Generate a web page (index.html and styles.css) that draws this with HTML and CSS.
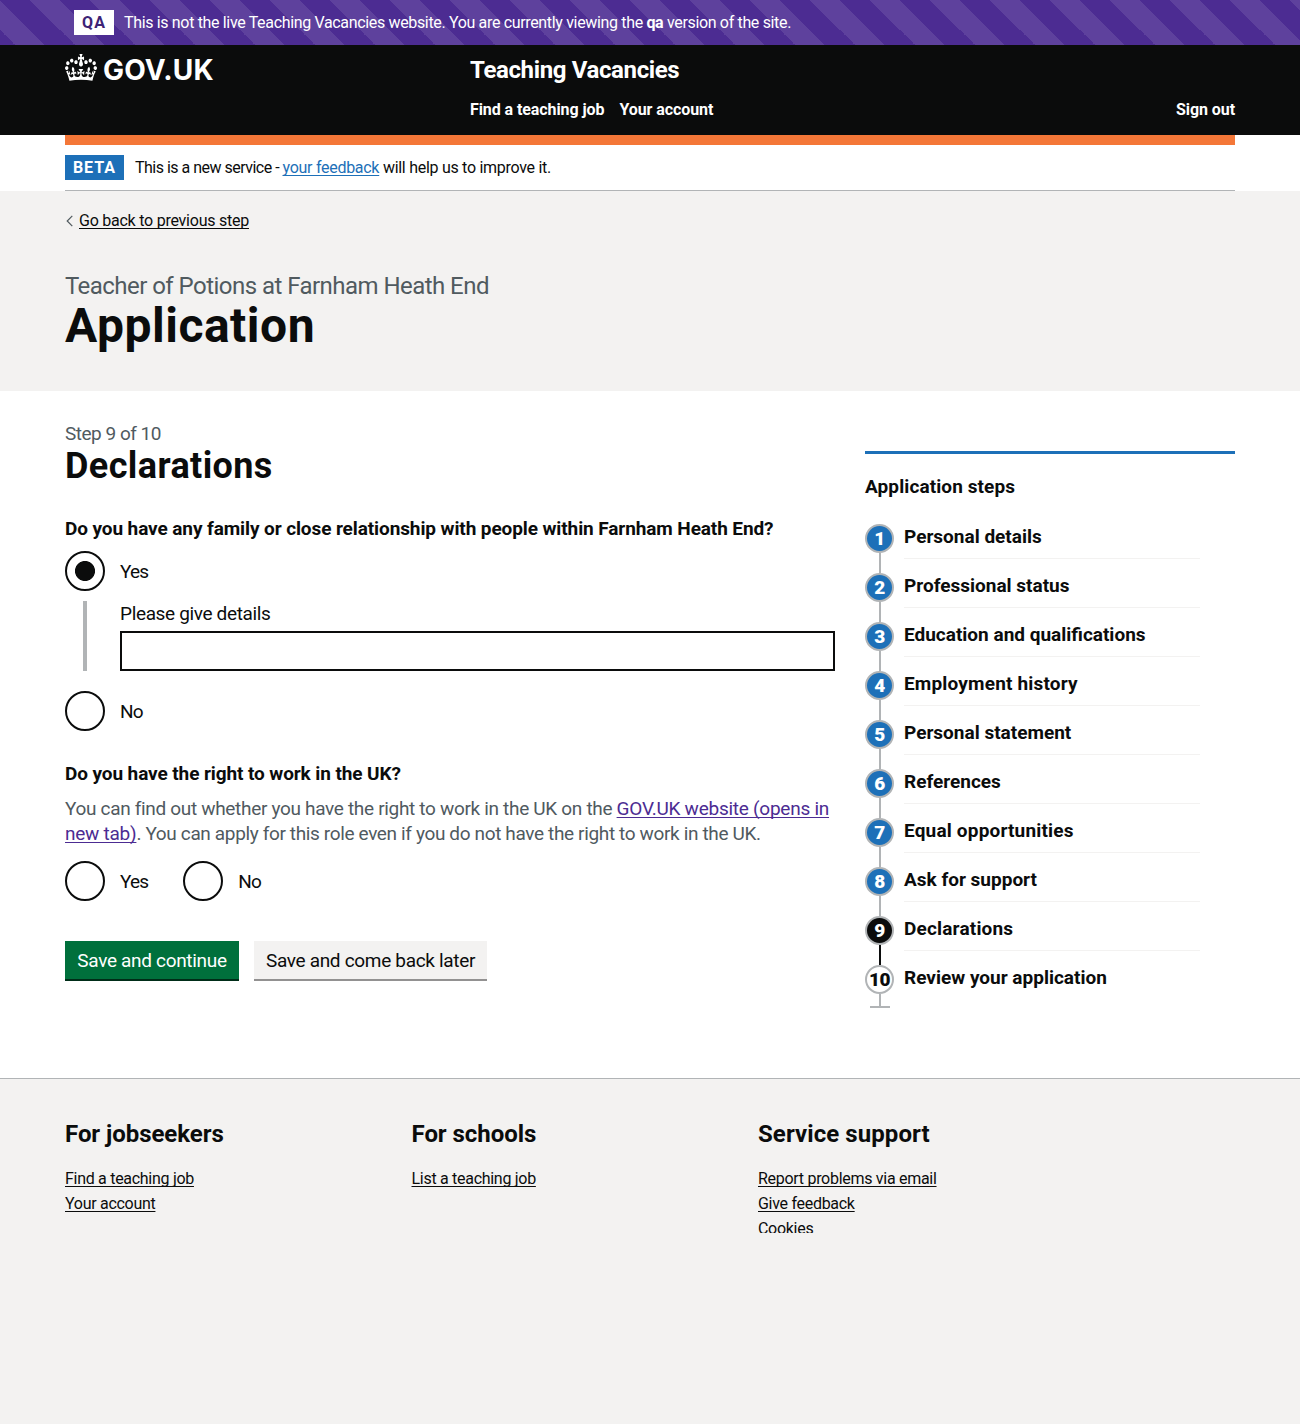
FILE: index.html
```html
<!DOCTYPE html>
<html lang="en">
<head>
<meta charset="utf-8">
<title>Declarations - Application - Teaching Vacancies</title>
<link rel="stylesheet" href="styles.css">
</head>
<body>
<div class="env-banner">
  <strong class="env-banner__tag">QA</strong>
  <span class="env-banner__text">This is not the live Teaching Vacancies website. You are currently viewing the <b>qa</b> version of the site.</span>
</div>

<header class="header">
  <div class="container header__row">
    <a class="logo" href="#">
      <svg class="logo__crown" viewBox="0 0 132 97" preserveAspectRatio="none" aria-hidden="true"><path fill="currentColor" d="M25 30.2c3.5 1.5 7.7-.2 9.1-3.7 1.5-3.6-.2-7.8-3.9-9.2-3.6-1.4-7.6.3-9.1 3.9-1.4 3.5.3 7.5 3.9 9zM9 39.5c3.6 1.5 7.8-.2 9.2-3.7 1.5-3.6-.2-7.8-3.9-9.1-3.6-1.5-7.6.2-9.1 3.8-1.4 3.5.3 7.5 3.8 9zM4.4 57.2c3.5 1.5 7.7-.2 9.1-3.8 1.5-3.6-.2-7.7-3.9-9.1-3.5-1.5-7.6.3-9.1 3.8-1.4 3.5.3 7.6 3.9 9.1zm38.3-21.4c3.5 1.5 7.7-.2 9.1-3.8 1.5-3.6-.2-7.7-3.9-9.1-3.6-1.5-7.6.3-9.1 3.8-1.3 3.6.4 7.7 3.9 9.1zm64.4-5.6c-3.6 1.5-7.8-.2-9.1-3.7-1.5-3.6.2-7.8 3.8-9.2 3.6-1.4 7.7.3 9.2 3.9 1.3 3.5-.4 7.5-3.9 9zm15.9 9.3c-3.6 1.5-7.7-.2-9.1-3.7-1.5-3.6.2-7.8 3.7-9.1 3.6-1.5 7.7.2 9.2 3.8 1.5 3.5-.3 7.5-3.8 9zm4.7 17.7c-3.6 1.5-7.8-.2-9.2-3.8-1.5-3.6.2-7.7 3.9-9.1 3.6-1.5 7.7.3 9.2 3.8 1.3 3.5-.4 7.6-3.9 9.1zM89.3 35.8c-3.6 1.5-7.8-.2-9.2-3.8-1.4-3.6.2-7.7 3.9-9.1 3.6-1.5 7.7.3 9.2 3.8 1.4 3.6-.3 7.7-3.9 9.1zM69.7 17.7l8.9 4.7V9.3l-8.9 2.8c-.2-.3-.5-.6-.9-.9L72.4 0H59.6l3.5 11.2c-.3.3-.6.5-.9.9l-8.8-2.8v13.1l8.8-4.7c.3.3.6.7.9.9l-5 15.4v.1c-.2.8-.4 1.6-.4 2.4 0 4.1 3.1 7.5 7 8.1h.2c.3 0 .7.1 1 .1.4 0 .7 0 1-.1h.2c4-.6 7.1-4.1 7.1-8.1 0-.8-.1-1.7-.4-2.4V34l-5.1-15.4c.4-.2.7-.6 1-.9zM66 92.8c16.9 0 32.8 1.1 47.1 3.2 4-16.9 8.9-26.7 14-33.5l-9.6-3.4c1 4.9 1.1 7.2 0 10.2-1.5-1.4-3-4.3-4.2-8.7L108.6 76c2.8-2 5-3.2 7.5-3.3-4.4 9.4-10 11.9-13.6 11.2-4.3-.8-6.3-4.6-5.6-7.9 1-4.7 5.7-5.9 8-.5 4.3-8.7-3-11.4-7.6-8.8 7.1-7.2 7.9-13.5 2.1-21.1-8 6.1-8.1 12.3-4.5 20.8-4.7-5.4-12.1-2.5-9.5 6.2 3.4-5.2 7.9-2 7.2 3.1-.6 4.3-6.4 7.8-13.5 7.2-10.3-.9-10.9-8-11.2-13.8 2.5-.5 7.1 1.8 11 7.3L80.2 60c-4.1 4.4-8 5.3-12.3 5.4 1.4-4.4 8-11.6 8-11.6H55.5s6.4 7.2 7.9 11.6c-4.2-.1-8-1-12.3-5.4l1.4 16.4c3.9-5.5 8.5-7.7 10.9-7.3-.3 5.8-.9 12.8-11.1 13.8-7.2.6-12.9-2.9-13.5-7.2-.7-5 3.8-8.3 7.1-3.1 2.7-8.7-4.6-11.6-9.4-6.2 3.7-8.5 3.6-14.7-4.6-20.8-5.8 7.6-5 13.9 2.2 21.1-4.7-2.6-11.9.1-7.7 8.8 2.3-5.5 7.1-4.2 8.1.5.7 3.3-1.3 7.1-5.7 7.9-3.5.7-9-1.8-13.5-11.2 2.5.1 4.7 1.3 7.5 3.3l-4.7-15.4c-1.2 4.4-2.7 7.2-4.3 8.7-1.1-3-.9-5.3 0-10.2l-9.5 3.4c5 6.9 9.9 16.7 14 33.5 14.8-2.1 30.8-3.2 47.7-3.2z"/></svg>
      <span class="logo__text">GOV.UK</span>
    </a>
    <div class="header__content">
      <a class="header__service" href="#">Teaching Vacancies</a>
      <nav class="header__nav">
        <a href="#">Find a teaching job</a>
        <a href="#">Your account</a>
        <a class="header__signout" href="#">Sign out</a>
      </nav>
    </div>
  </div>
</header>

<div class="container phase">
  <strong class="phase__tag">BETA</strong>
  <span class="phase__text"><span class="phase__lead">This is a new service - </span><a href="#">your feedback</a> will help us to improve it.</span>
</div>

<div class="hero">
  <div class="container">
    <a class="back" href="#"><svg class="back__arrow" viewBox="0 0 8 12" aria-hidden="true"><path d="M6.8 .9 1.7 6l5.1 5.1" fill="none" stroke="#505a5f" stroke-width="1.2"/></svg><span class="back__text">Go back to previous step</span></a>
    <span class="hero__caption">Teacher of Potions at Farnham Heath End</span>
    <h1 class="hero__title">Application</h1>
  </div>
</div>

<main class="container main">
  <form class="form">
    <span class="form__caption">Step 9 of 10</span>
    <h2 class="form__title">Declarations</h2>

    <h3 class="question">Do you have any family or close relationship with people within Farnham Heath End?</h3>
    <label class="radio"><span class="radio__dot radio__dot--on"></span><span class="radio__label">Yes</span></label>
    <div class="conditional">
      <label class="conditional__label" for="details">Please give details</label>
      <input class="conditional__input" id="details" type="text">
    </div>
    <label class="radio"><span class="radio__dot"></span><span class="radio__label">No</span></label>

    <h3 class="question question--second">Do you have the right to work in the UK?</h3>
    <div class="hint">You can find out whether you have the right to work in the UK on the <a href="#">GOV.UK website (opens in<br>new tab)</a><span class="hint__rest">. You can apply for this role even if you do not have the right to work in the UK.</span></div>
    <div class="radios-inline">
      <label class="radio"><span class="radio__dot"></span><span class="radio__label">Yes</span></label>
      <label class="radio"><span class="radio__dot"></span><span class="radio__label">No</span></label>
    </div>

    <div class="actions">
      <button class="button button--primary" type="button">Save and continue</button>
      <button class="button button--secondary" type="button">Save and come back later</button>
    </div>
  </form>

  <aside class="steps">
    <h2 class="steps__title">Application steps</h2>
    <ol class="steps__list">
      <li class="step step--done"><span class="step__num">1</span><span class="step__name">Personal details</span></li>
      <li class="step step--done"><span class="step__num">2</span><span class="step__name">Professional status</span></li>
      <li class="step step--done"><span class="step__num">3</span><span class="step__name">Education and qualifications</span></li>
      <li class="step step--done"><span class="step__num">4</span><span class="step__name step__name--wide">Employment history</span></li>
      <li class="step step--done"><span class="step__num">5</span><span class="step__name">Personal statement</span></li>
      <li class="step step--done"><span class="step__num">6</span><span class="step__name">References</span></li>
      <li class="step step--done"><span class="step__num">7</span><span class="step__name step__name--wide">Equal opportunities</span></li>
      <li class="step step--done"><span class="step__num">8</span><span class="step__name">Ask for support</span></li>
      <li class="step step--current"><span class="step__num">9</span><span class="step__name step__name--wide">Declarations</span></li>
      <li class="step step--last"><span class="step__num">10</span><span class="step__name">Review your application</span></li>
    </ol>
  </aside>
</main>

<footer class="footer">
  <div class="container footer__cols">
    <section>
      <h2 class="footer__title">For jobseekers</h2>
      <ul class="footer__links"><li><a href="#">Find a teaching job</a></li><li><a href="#">Your account</a></li></ul>
    </section>
    <section>
      <h2 class="footer__title">For schools</h2>
      <ul class="footer__links"><li><a href="#">List a teaching job</a></li></ul>
    </section>
    <section>
      <h2 class="footer__title footer__title--wide">Service support</h2>
      <ul class="footer__links"><li><a href="#">Report problems via email</a></li><li><a href="#">Give feedback</a></li><li><a href="#">Cookies</a></li></ul>
    </section>
  </div>
</footer>
</body>
</html>
```
FILE: styles.css
```css
* { box-sizing: border-box; }

body {
  margin: 0;
  min-height: 1424px;
  display: flex;
  flex-direction: column;
  background: #fff;
  color: #0b0c0c;
  font-family: Roboto, "Liberation Sans", sans-serif;
  font-size: 19px;
  line-height: 25px;
  letter-spacing: -0.3px;
}

h1, h2, h3, ul, ol { margin: 0; padding: 0; }
ol, ul { list-style: none; }
a { color: inherit; text-decoration-thickness: 1px; text-underline-offset: 1.5px; text-decoration-skip-ink: none; }

.container { width: 1170px; margin: 0 auto; }

/* Environment banner */
.env-banner {
  display: flex;
  gap: 10px;
  height: 45px;
  padding: 10px 74px;
  color: #fff;
  font-size: 16px;
  letter-spacing: -0.34px;
  background: linear-gradient(45deg, #4c2c92 25%, #5e419d 25%, #5e419d 50%, #4c2c92 50%, #4c2c92 75%, #5e419d 75%) 0 0 / 60px 60px;
}
.env-banner__tag {
  width: 40px;
  height: 25px;
  background: #fff;
  color: #3d2375;
  text-align: center;
  letter-spacing: 1px;
  text-indent: 0;
}

/* Header */
.header { height: 90px; background: #0b0c0c; color: #fff; }
.header a { text-decoration: none; }
.header__row { display: flex; padding-top: 10px; }
.logo { display: flex; width: 405px; height: 30px; gap: 6px; }
.logo__crown { width: 32px; height: 27px; margin-top: -1px; }
.logo__text { font: 700 28px/30px Inter, sans-serif; letter-spacing: 0.2px; }
.header__content { flex: 1; font-weight: 700; }
.header__service { display: block; font-size: 24px; line-height: 30px; letter-spacing: -0.37px; }
.header__nav { display: flex; gap: 15px; margin-top: 15px; font-size: 16px; line-height: 20px; letter-spacing: -0.08px; }
.header__signout { margin-left: auto; }

/* Phase banner */
.phase {
  display: flex;
  gap: 11px;
  padding: 10px 0;
  border-top: 10px solid #f47738;
  border-bottom: 1px solid #b1b4b6;
  font-size: 16px;
  letter-spacing: -0.28px;
}
.phase__tag { width: 59px; height: 25px; background: #1d70b8; color: #fff; text-align: center; letter-spacing: 1px; }
.phase__lead { letter-spacing: -0.51px; }
.phase__text a { color: #1d70b8; }

/* Page heading */
.hero { height: 200px; padding-top: 20px; background: #f3f2f1; }
.back { display: flex; align-items: center; gap: 5px; font-size: 16px; line-height: 20px; letter-spacing: -0.24px; text-decoration: none; }
.back__arrow { width: 9px; height: 12px; }
.back__text { text-decoration: underline 1px; text-decoration-skip-ink: none; text-underline-offset: 1.5px; }
.hero__caption { display: block; margin-top: 40px; font-size: 24px; line-height: 30px; letter-spacing: -0.54px; color: #505a5f; }
.hero__title { font-size: 48px; line-height: 50px; letter-spacing: 0.5px; }

/* Form */
.main { display: flex; gap: 30px; padding-top: 30px; height: 687px; }
.form { width: 770px; }
.form__caption { display: block; color: #505a5f; letter-spacing: -0.49px; }
.form__title { font-size: 36px; line-height: 40px; letter-spacing: 0.4px; margin-bottom: 30px; }
.question { font-size: 19px; line-height: 25px; letter-spacing: -0.1px; margin-bottom: 10px; }
.question--second { margin-top: 30px; }
.radio { display: flex; align-items: center; height: 40px; gap: 15px; }
.radio__dot { width: 40px; height: 40px; border: 2px solid #0b0c0c; border-radius: 50%; }
.radio__dot--on { background: radial-gradient(circle, #0b0c0c 9.6px, transparent 10.4px); }
.radio__label { letter-spacing: -0.8px; }
.radio__label { min-width: 28px; }
.conditional {
  display: flex;
  flex-direction: column;
  gap: 5px;
  margin: 10px 0 20px 18px;
  padding-left: 33px;
  border-left: 4px solid #b1b4b6;
}
.conditional__label { letter-spacing: -0.35px; }
.conditional__input { width: 100%; height: 40px; border: 2px solid #0b0c0c; border-radius: 0; background: #fff; font: inherit; }
.hint { color: #505a5f; margin-bottom: 15px; white-space: nowrap; letter-spacing: -0.32px; }
.hint a { color: #4c2c92; letter-spacing: -0.25px; }
.hint__rest { letter-spacing: -0.36px; }
.radios-inline { display: flex; gap: 35px; margin-bottom: 40px; }
.actions { display: flex; gap: 15px; }
.button { height: 38px; padding: 0; border: 0; border-radius: 0; font: inherit; letter-spacing: -0.32px; }
.button--primary { width: 174px; background: #00703c; color: #fff; box-shadow: 0 2px 0 #002d18; }
.button--secondary { width: 233px; background: #f3f2f1; color: #0b0c0c; box-shadow: 0 2px 0 #929191; }

/* Step navigation */
.steps { width: 370px; margin-top: 30px; align-self: flex-start; border-top: 3px solid #1d70b8; padding-top: 20px; letter-spacing: 0; font-weight: 700; }
.steps__title { font-size: 19px; line-height: 25px; letter-spacing: 0.1px; margin-bottom: 25px; }
.step { display: flex; gap: 10px; height: 49px; position: relative; }
.step__num {
  width: 29px;
  height: 29px;
  border: 2px solid #b1b4b6;
  border-radius: 50%;
  text-align: center;
  font-weight: 900;
  line-height: 25px;
  letter-spacing: -0.6px;
}
.step__name { width: 296px; height: 35px; border-bottom: 1px solid #f3f2f1; }
.step__name--wide { letter-spacing: 0.18px; }
/* connector to the next step */
.step::after { content: ""; position: absolute; left: 14px; top: 29px; width: 2px; height: 20px; background: #b1b4b6; }
.step--done .step__num { background: #1d70b8; color: #fff; }
.step--current .step__num { background: #0b0c0c; color: #fff; }
.step--current::after { background: #0b0c0c; }
.step--last .step__name { border-bottom: 0; }
.step--last::after { left: 5px; width: 20px; height: 14px; background: linear-gradient(#b1b4b6, #b1b4b6) center / 2px 100% no-repeat, linear-gradient(#b1b4b6, #b1b4b6) bottom / 100% 2px no-repeat; }

/* Footer */
.footer { flex: 1; border-top: 1px solid #b1b4b6; background: #f3f2f1; padding-top: 40px; }
.footer__cols { display: grid; grid-template-columns: repeat(3, 316.5px); gap: 30px; height: 114px; overflow: hidden; }
.footer__title { font-size: 24px; line-height: 30px; letter-spacing: -0.05px; margin-bottom: 17px; }
.footer__title--wide { letter-spacing: 0.08px; }
.footer__links { font-size: 16px; line-height: 25px; letter-spacing: -0.29px; }
```
